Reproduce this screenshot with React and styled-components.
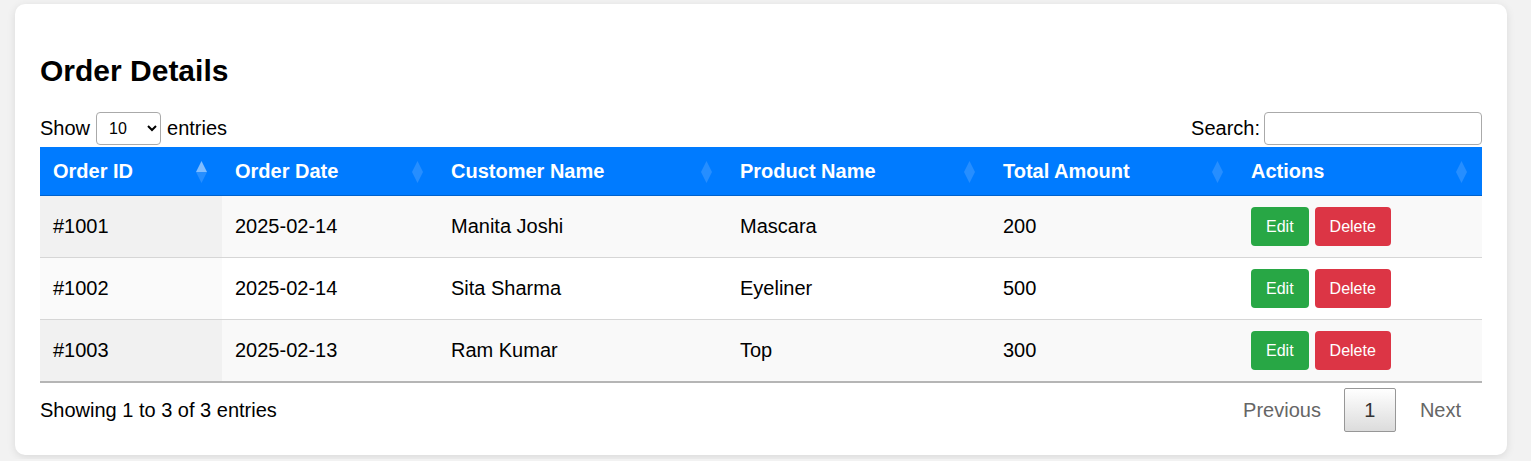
import React from "react";
import styled, { createGlobalStyle } from "styled-components";

const GlobalStyle = createGlobalStyle`
  body {
    margin: 0;
    background: #f2f2f2;
    font-family: "Liberation Sans", Arial, sans-serif;
  }
`;

const orders = [
  { id: "#1001", date: "2025-02-14", customer: "Manita Joshi", product: "Mascara", total: 200 },
  { id: "#1002", date: "2025-02-14", customer: "Sita Sharma", product: "Eyeliner", total: 500 },
  { id: "#1003", date: "2025-02-13", customer: "Ram Kumar", product: "Top", total: 300 },
];

const columns = [
  { label: "Order ID", width: 182, sorted: true },
  { label: "Order Date", width: 216 },
  { label: "Customer Name", width: 289 },
  { label: "Product Name", width: 263 },
  { label: "Total Amount", width: 248 },
  { label: "Actions", width: 244 },
];

const SortIcon = ({ active }) => (
  <SortSvg width="11" height="22" viewBox="0 0 11 22">
    <path d="M5.5 0 L11 11 L0 11 Z" fill="#fff" fillOpacity={active ? 0.5 : 0.15} />
    <path d="M0 11 L11 11 L5.5 22 Z" fill="#fff" fillOpacity="0.15" />
  </SortSvg>
);

const App = () => {
  return (
    <Page>
      <GlobalStyle />
      <Card>
        <Title>Order Details</Title>
        <Controls>
          <Label>
            Show
            <Select defaultValue="10">
              <option>10</option>
              <option>25</option>
              <option>50</option>
              <option>100</option>
            </Select>
            entries
          </Label>
          <Label>
            Search:
            <SearchInput type="search" />
          </Label>
        </Controls>
        <Table>
          <colgroup>
            {columns.map((c) => (
              <col key={c.label} style={{ width: c.width }} />
            ))}
          </colgroup>
          <thead>
            <tr>
              {columns.map((c) => (
                <Th key={c.label}>
                  {c.label}
                  <SortIcon active={c.sorted} />
                </Th>
              ))}
            </tr>
          </thead>
          <tbody>
            {orders.map((o, i) => {
              const odd = i % 2 === 0;
              const divider = i > 0;
              return (
                <Row key={o.id} $odd={odd}>
                  <Td $sorted $odd={odd} $divider={divider}>{o.id}</Td>
                  <Td $divider={divider}>{o.date}</Td>
                  <Td $divider={divider}>{o.customer}</Td>
                  <Td $divider={divider}>{o.product}</Td>
                  <Td $divider={divider}>{o.total}</Td>
                  <Td $divider={divider}>
                    <Actions>
                      <ActionButton $color="#28a745">Edit</ActionButton>
                      <ActionButton $color="#dc3545">Delete</ActionButton>
                    </Actions>
                  </Td>
                </Row>
              );
            })}
          </tbody>
        </Table>
        <Footer>
          <Info>Showing 1 to 3 of 3 entries</Info>
          <Pagination>
            <PageLink>Previous</PageLink>
            <PageCurrent>1</PageCurrent>
            <PageLink>Next</PageLink>
          </Pagination>
        </Footer>
      </Card>
    </Page>
  );
};

const Page = styled.div`
  padding: 4px 24px 4px 15px;
`;

const Card = styled.div`
  background: #fff;
  border-radius: 10px;
  box-shadow: 0 2px 8px rgba(0, 0, 0, 0.1);
  padding: 29px 25px 23px;
  color: #000;
`;

const Title = styled.h2`
  font-size: 30px;
  font-weight: bold;
  line-height: 34px;
  margin: 21px 0 23px;
`;

const Controls = styled.div`
  display: flex;
  justify-content: space-between;
  align-items: center;
  height: 35px;
  margin-bottom: 1px;
`;

const Label = styled.label`
  display: flex;
  align-items: center;
  gap: 4px;
  font-size: 20px;
`;

const Select = styled.select`
  height: 33px;
  width: 65px;
  padding: 0 4px 0 8px;
  border: 1px solid #aaa;
  border-radius: 4px;
  background: #fff;
  font-family: "Liberation Sans", Arial, sans-serif;
  font-size: 16px;
  margin: 0 2px;
`;

const SearchInput = styled.input`
  width: 218px;
  height: 33px;
  box-sizing: border-box;
  border: 1px solid #aaa;
  border-radius: 4px;
  margin-left: 0;
`;

const Table = styled.table`
  width: 100%;
  table-layout: fixed;
  border-collapse: collapse;
  font-size: 20px;
  line-height: 23px;
  border-bottom: 2px solid #b5b5b5;
`;

const Th = styled.th`
  position: relative;
  background: #007bff;
  color: #fff;
  text-align: left;
  font-weight: bold;
  padding: 13px 12px 12px 13px;
  border-bottom: 1px solid #0062cc;
`;

const SortSvg = styled.svg`
  position: absolute;
  right: 15px;
  top: 14px;
`;

const Row = styled.tr`
  background: ${(p) => (p.$odd ? "#f9f9f9" : "#fff")};
`;

const Td = styled.td`
  padding: 19px 12px 19px 13px;
  border-top: ${(p) => (p.$divider ? "1px solid #d6d6d6" : "none")};
  background: ${(p) => (p.$sorted ? (p.$odd ? "#f1f1f1" : "#fafafa") : "transparent")};
`;

const Actions = styled.div`
  display: flex;
  gap: 6px;
  margin: -8px 0;
`;

const ActionButton = styled.button`
  height: 39px;
  background: ${(p) => p.$color};
  color: #fff;
  border: none;
  border-radius: 4px;
  font-family: "Liberation Sans", Arial, sans-serif;
  font-size: 16px;
  padding: 0 15px;
  cursor: pointer;
`;

const Footer = styled.div`
  display: flex;
  justify-content: space-between;
  align-items: center;
  padding-top: 5px;
  font-size: 20px;
`;

const Info = styled.div`
  padding-top: 1px;
`;

const Pagination = styled.div`
  display: flex;
  align-items: center;
  gap: 2px;
`;

const PageLink = styled.span`
  color: #666;
  padding: 10px 21px 10px 22px;
`;

const PageCurrent = styled.span`
  box-sizing: border-box;
  width: 52px;
  height: 44px;
  display: flex;
  align-items: center;
  justify-content: center;
  border: 1px solid #979797;
  border-radius: 2px;
  background: linear-gradient(to bottom, #fff 0%, #dcdcdc 100%);
  color: #333;
`;

export default App;
